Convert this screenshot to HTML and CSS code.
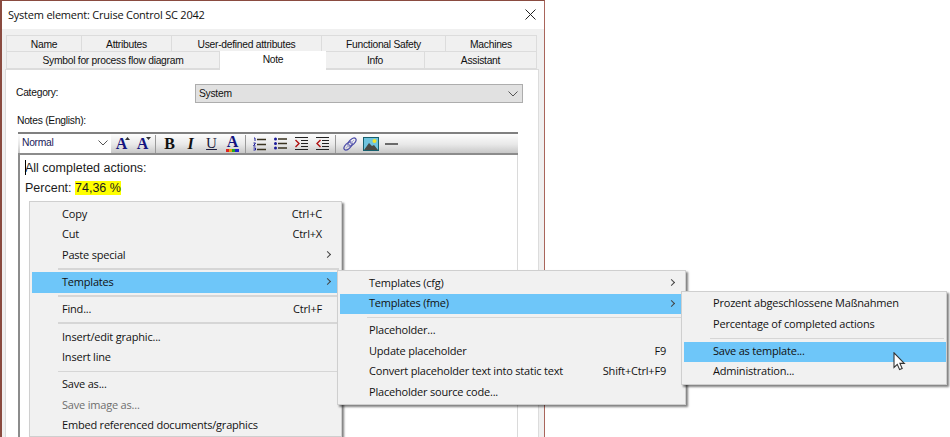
FILE: index.html
```html
<!DOCTYPE html>
<html lang="en">
<head>
<meta charset="utf-8">
<title>System element</title>
<link rel="stylesheet" href="styles.css">
</head>
<body>
<div class="window">
  <header class="titlebar">
    <span class="title">System element: Cruise Control SC 2042</span>
    <svg class="close" width="11" height="11" viewBox="0 0 11 11"><path d="M.5.5l10 10M10.5.5l-10 10" stroke="#222" stroke-width="1" fill="none"/></svg>
  </header>
  <div class="dialog">
    <div class="tabrow row-one">
      <div class="tab w-name">Name</div>
      <div class="tab w-attr">Attributes</div>
      <div class="tab w-uda">User-defined attributes</div>
      <div class="tab w-fs">Functional Safety</div>
      <div class="tab w-mach">Machines</div>
    </div>
    <div class="tabrow row-two">
      <div class="tab w-sym">Symbol for process flow diagram</div>
      <div class="tab tab-active w-note">Note</div>
      <div class="tab w-info">Info</div>
      <div class="tab w-asst">Assistant</div>
    </div>
    <div class="page">
      <div class="field">
        <label class="label category-label">Category:</label>
        <div class="select"><span>System</span>
          <svg width="10" height="6" viewBox="0 0 10 6"><path d="M.5.5L5 5 9.5.5" stroke="#555" fill="none"/></svg>
        </div>
      </div>
      <div class="label notes-label">Notes (English):</div>
      <div class="editor">
        <div class="toolbar">
          <div class="combo"><span>Normal</span>
            <svg width="10" height="6" viewBox="0 0 10 6"><path d="M.5.5L5 5 9.5.5" stroke="#555" fill="none"/></svg>
          </div>
          <div class="tool"><span class="glyph navy">A</span><svg class="mini" width="5" height="3" viewBox="0 0 5 3"><path d="M0 3L2.5 0 5 3z" fill="#333"/></svg></div>
          <div class="tool"><span class="glyph navy">A</span><svg class="mini" width="5" height="3" viewBox="0 0 5 3"><path d="M0 0L2.5 3 5 0z" fill="#333"/></svg></div>
          <div class="sep"></div>
          <div class="tool"><span class="glyph">B</span></div>
          <div class="tool"><span class="glyph italic">I</span></div>
          <div class="tool"><span class="glyph under">U</span></div>
          <div class="tool"><span class="glyph navy colorA">A</span>
            <svg class="rainbow" width="13" height="3" viewBox="0 0 13 3"><path d="M0 0h3v3H0z" fill="#d22"/><path d="M3 0h3v3H3z" fill="#e8a010"/><path d="M6 0h3v3H6z" fill="#2a2"/><path d="M9 0h4v3H9z" fill="#22c"/></svg>
          </div>
          <div class="sep"></div>
          <div class="tool"><svg width="13" height="14" viewBox="0 0 13 14"><path d="M1 1h1v3M.5 6h2L.5 9h2M.5 11h2v2h-2" stroke="#1a1a9a" fill="none"/><path d="M4 2.5h9M4 7.5h9M4 12.5h9" stroke="#3a3320" stroke-width="1.4"/></svg></div>
          <div class="tool"><svg width="13" height="13" viewBox="0 0 13 13"><circle cx="1.5" cy="2" r="1.5" fill="#1a1a9a"/><circle cx="1.5" cy="6.5" r="1.5" fill="#1a1a9a"/><circle cx="1.5" cy="11" r="1.5" fill="#1a1a9a"/><path d="M4 2h9M4 6.5h9M4 11h9" stroke="#3a3320" stroke-width="1.4"/></svg></div>
          <div class="tool"><svg width="13" height="13" viewBox="0 0 13 13"><path d="M0 .5h13M6 3.5h7M6 6.5h7M6 9.5h7M0 12.5h13" stroke="#222"/><path d="M.5 3L4 6.5.5 10" stroke="#b01010" stroke-width="1.4" fill="none"/></svg></div>
          <div class="tool"><svg width="13" height="13" viewBox="0 0 13 13"><path d="M0 .5h13M6 3.5h7M6 6.5h7M6 9.5h7M0 12.5h13" stroke="#222"/><path d="M4.500 3L1 6.500 4.500 10" stroke="#b01010" stroke-width="1.4" fill="none"/></svg></div>
          <div class="sep"></div>
          <div class="tool"><svg width="14" height="14" viewBox="0 0 14 14"><g fill="none" stroke="#4a4aa8" stroke-width="1.2"><ellipse cx="5" cy="9" rx="5" ry="2.6" transform="rotate(-45 5 9)"/><ellipse cx="9" cy="5" rx="5" ry="2.6" transform="rotate(-45 9 5)"/></g><path d="M3 11l8-8" stroke="#a8a8d8"/></svg></div>
          <div class="tool"><svg width="16" height="14" viewBox="0 0 16 14"><path d="M0 0h16v14H0z" fill="#17606e"/><path d="M1 1h14v12H1z" fill="#6fc4de"/><circle cx="11.500" cy="4" r="2" fill="#f2e32a"/><path d="M1 13l5-7 3 3 2-1 4 5z" fill="#4a4a44"/></svg></div>
          <div class="tool"><svg width="13" height="2" viewBox="0 0 13 2"><path d="M0 0h13v2H0z" fill="#6a6a6a"/></svg></div>
        </div>
        <div class="content">
          <p class="line"><span class="caret"></span>All completed actions:</p>
          <p class="line">Percent: <mark class="hl">74,36 %</mark></p>
        </div>
      </div>
    </div>
  </div>
</div>

<div class="menu menu-main">
  <div class="item"><span>Copy</span><span>Ctrl+C</span></div>
  <div class="item"><span>Cut</span><span>Ctrl+X</span></div>
  <div class="item"><span>Paste special</span><i class="arrow"></i></div>
  <div class="rule"></div>
  <div class="item active"><span>Templates</span><i class="arrow"></i></div>
  <div class="rule"></div>
  <div class="item"><span>Find...</span><span>Ctrl+F</span></div>
  <div class="rule rule-tall"></div>
  <div class="item"><span>Insert/edit graphic...</span></div>
  <div class="item"><span>Insert line</span></div>
  <div class="rule"></div>
  <div class="item"><span>Save as...</span></div>
  <div class="item disabled"><span>Save image as...</span></div>
  <div class="item"><span>Embed referenced documents/graphics</span></div>
</div>

<div class="menu menu-sub">
  <div class="item"><span>Templates (cfg)</span><i class="arrow"></i></div>
  <div class="item active"><span>Templates (fme)</span><i class="arrow"></i></div>
  <div class="rule"></div>
  <div class="item"><span>Placeholder...</span></div>
  <div class="item"><span>Update placeholder</span><span>F9</span></div>
  <div class="item"><span>Convert placeholder text into static text</span><span>Shift+Ctrl+F9</span></div>
  <div class="item"><span>Placeholder source code...</span></div>
</div>

<div class="menu menu-third">
  <div class="item"><span>Prozent abgeschlossene Maßnahmen</span></div>
  <div class="item"><span>Percentage of completed actions</span></div>
  <div class="rule"></div>
  <div class="item active"><span>Save as template...</span></div>
  <div class="item"><span>Administration...</span></div>
</div>

<svg class="cursor" width="13" height="19" viewBox="0 0 13 19"><path d="M1 .8v14.600l3.300-3 2.300 5.200 2.600-1.200-2.300-5h4.400z" fill="#fff" stroke="#333" stroke-width="1.100"/></svg>
</body>
</html>
```
FILE: styles.css
```css
* { box-sizing: border-box; }
html, body { margin: 0; height: 437px; overflow: hidden; background: #fff; }
body { position: relative; width: 950px; font-family: "Open Sans", "Noto Sans", sans-serif; color: #111; }

.window {
  width: 545px; height: 437px;
  display: flex; flex-direction: column;
  border-left: 2px solid #8a4b40;
  border-right: 1px solid #a9655b;
  border-top: 1px solid #8a4b40;
}
.titlebar {
  height: 28px; flex: none; background: #fff;
  display: flex; align-items: center; justify-content: space-between;
  padding: 0 8px 2px 6px;
}
.title { font-size: 11px; letter-spacing: -.02em; }
.dialog {
  flex: 1; min-height: 0; background: #f0f0f0;
  padding: 6px 5px 0 3px;
  display: flex; flex-direction: column;
  font-family: "Liberation Sans", Arial, sans-serif;
  font-size: 10.3px;
  letter-spacing: -.27px;
}
.tabrow { display: flex; height: 17px; flex: none; margin-left: 1px; }
.tab {
  background: #f0f0f0; color: #111;
  border: 1px solid #dcdcdc; border-left: 0;
  text-align: center; line-height: 15px; padding-top: 1px;
}
.tabrow .tab:first-child { border-left: 1px solid #dcdcdc; }
.row-two .tab { border-top: 0; line-height: 16px; }
.row-two .tab-active { background: #fff; height: 19px; margin-top: -1px; border: 0; padding-top: 0; line-height: 17px; position: relative; z-index: 1; }
.w-name { width: 76px; } .w-attr { width: 90px; } .w-uda { width: 150px; } .w-fs { width: 124px; } .w-mach { width: 91px; }
.w-sym { width: 214px; } .w-note { width: 106px; } .w-info { width: 99px; } .w-asst { width: 112px; }

.page {
  flex: 1; min-height: 0; background: #fff;
  border: 1px solid #dcdcdc; border-bottom: 0;
  padding: 14px 15px 0 10px;
  display: flex; flex-direction: column;
}
.field { display: flex; justify-content: space-between; height: 20px; flex: none; }
.label { line-height: 15px; }
.category-label { margin-top: 1px; }
.select {
  width: 328px; height: 19px;
  background: #e1e1e1; border: 1px solid #adadad;
  display: flex; align-items: center; justify-content: space-between;
  padding: 0 4px 0 3px;
}
.notes-label { margin: 9px 0 0 1px; flex: none; }
.editor {
  width: 500px; flex: 1; min-height: 0; margin: 4px 0 0 2px;
  border-left: 2px solid #8c8c8c; border-right: 1px solid #dadada;
}
.toolbar {
  height: 23px; margin-left: -2px; margin-right: -1px;
  border-top: 2px solid #808080; border-bottom: 2px solid #8c8c8c;
  background: linear-gradient(#fdfdfd, #e8e8e8 55%, #c8c8c8);
  display: flex; align-items: center; padding-left: 2px;
}
.combo {
  width: 91px; height: 19px; background: #fff; flex: none;
  display: flex; align-items: center; justify-content: space-between;
  padding: 0 3px 2px 2px; color: #20205a;
}
.tool {
  width: 21px; height: 19px; flex: none; position: relative;
  display: flex; align-items: center; justify-content: center;
}
.sep { width: 1px; height: 18px; background: #9a9a9a; margin: 0 3px 0 2px; flex: none; }
.glyph { font: bold 16px/19px "Liberation Serif", serif; color: #111; letter-spacing: 0; }
.navy { color: #14147e; }
.italic { font-style: italic; }
.under { text-decoration: underline; font-weight: normal; font-size: 15px; color: #1c1c3c; }
.colorA { line-height: 16px; margin-top: -3px; }
.mini { position: absolute; top: 3px; right: 2px; }
.rainbow { position: absolute; bottom: 1px; left: 4px; }
.content { padding: 4px 5px; font-size: 12.5px; letter-spacing: 0; }
.line { margin: 0 0 2px; line-height: 18px; position: relative; color: #1c1c1c; }
.caret { position: absolute; left: 0; top: 1px; width: 1px; height: 15px; background: #000; }
.hl { background: #ffff00; color: #1c1c1c; }

.menu {
  position: absolute;
  background: #f1f1f1;
  border: 1px solid #cfcfcf;
  padding: 2px;
  box-shadow: 2px 2px 2px rgba(0,0,0,.5);
  font-size: 11px;
  letter-spacing: -.2px;
  color: #111;
}
.item {
  height: 20.5px; display: flex; align-items: center; justify-content: space-between;
  padding-bottom: 2px; position: relative; white-space: nowrap;
}
.rule { height: 1.5px; margin: 2.5px 0 2.5px; background: #d6d6d6; }
.rule-tall { margin-bottom: 3.5px; }
.active { background: #6ec6f9; }
.disabled { color: #6e6e6e; }
.arrow {
  position: absolute; right: 9px; top: 7px; width: 5px; height: 5px;
  border-top: 1px solid #444; border-right: 1px solid #444;
  transform: rotate(45deg);
}
.menu-main { left: 29px; top: 201px; width: 313px; height: 236px; overflow: hidden; }
.menu-main .item { padding-left: 30px; padding-right: 17px; }
.menu-main .rule { margin-left: 26px; }
.menu-sub { left: 337px; top: 270px; width: 349px; height: 135px; }
.menu-sub .item { padding-left: 29px; padding-right: 17px; }
.menu-sub .rule { margin-left: 27px; }
.menu-third { left: 681px; top: 291px; width: 266px; height: 94px; padding-right: 0; }
.menu-third .item { padding-left: 29px; }
.menu-third .item:not(.active) { padding-bottom: 3px; }
.menu-third .rule { margin-left: 26px; margin-right: 2px; }
.cursor { position: absolute; left: 893px; top: 352px; }
```
